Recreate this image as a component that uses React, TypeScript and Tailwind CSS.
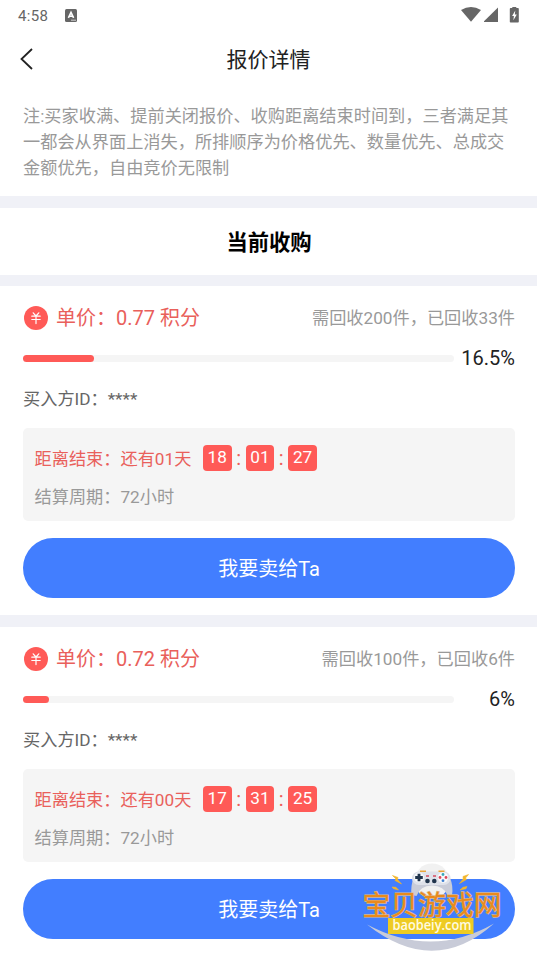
import { clsx } from "clsx";

type Offer = {
  price: string;
  need: number;
  done: number;
  percent: number;
  buyer: string;
  days: string;
  clock: string[];
  period: string;
};

const offers: Offer[] = [
  {
    price: "0.77",
    need: 200,
    done: 33,
    percent: 16.5,
    buyer: "****",
    days: "01",
    clock: ["18", "01", "27"],
    period: "72小时",
  },
  {
    price: "0.72",
    need: 100,
    done: 6,
    percent: 6,
    buyer: "****",
    days: "00",
    clock: ["17", "31", "25"],
    period: "72小时",
  },
];

function StatusBar() {
  return (
    <div className="flex h-8 items-center justify-between pl-[18px] pr-[18px] text-[#666]">
      <div className="flex items-center gap-[17px]">
        <span className="text-[15px] leading-5 tracking-[0.3px]">4:58</span>
        <svg width="12" height="13" viewBox="0 0 12 13" className="mb-px">
          <rect width="12" height="13" rx="1.5" fill="#666" />
          <path d="M3.4 8.8 6 3.4l2.6 5.4M4.3 7.2h3.4" stroke="#fff" strokeWidth="1.6" fill="none" />
          <path d="M6 11.2h5" stroke="#fff" strokeWidth=".7" />
        </svg>
      </div>
      <svg width="58" height="18" viewBox="0 0 58 18" fill="#666">
        <path d="M0 3Q10 -3 20 3L10 14.800Z" />
        <path d="M23 15V14.300L37 .6V15Z" />
        <path d="M51.300 -.5h4v1.600h1.700q.8 0 .8.8V14.700q0 .8-.8.8h-7.400q-.8 0-.8-.8V1.900q0-.8.8-.8h1.700Z" />
        <path d="M54.300 3.500 51.100 9h1.800L52.400 13.200 55.800 7.600h-2Z" fill="#fff" />
      </svg>
    </div>
  );
}

function YenIcon() {
  return (
    <svg width="24" height="24" viewBox="0 0 24 24" className="shrink-0">
      <circle cx="12" cy="12" r="12" fill="#ff5a57" />
      <path
        d="M9.200 6.800 12 10 14.800 6.800M12 10V17.600M7.800 10.200h8.400M7.800 13.500h8.400"
        fill="none"
        stroke="#fff"
        strokeWidth="1.200"
        strokeLinecap="round"
      />
    </svg>
  );
}

function Countdown({ clock }: { clock: string[] }) {
  return (
    <div className="flex items-center">
      {clock.map((part, i) => (
        <div key={i} className="flex items-center">
          {i > 0 && <span className="w-[14px] text-center text-[20px] leading-[26px] text-[#ee5c58]">:</span>}
          <span className="h-[26px] w-[28.700px] rounded-[4px] bg-[#ff5a57] text-center text-[17.200px] leading-[25px] text-white">
            {part}
          </span>
        </div>
      ))}
    </div>
  );
}

function OfferCard({ offer }: { offer: Offer }) {
  return (
    <section className="bg-white pb-[17px] pl-[23px] pr-[22px]">
      <div className="flex h-[63px] items-center justify-between">
        <div className="flex items-center gap-[8px] pl-px text-[20px] text-[#e9605b]">
          <YenIcon />
          <span className="whitespace-pre">单价：{offer.price} 积分</span>
        </div>
        <span className="pt-[3px] text-[17.200px] text-[#999]">
          需回收{offer.need}件，已回收{offer.done}件
        </span>
      </div>

      <div className="flex h-[18px] items-center justify-between">
        <div className="h-[7px] w-[431px] rounded-full bg-[#f5f5f5]">
          <div className="h-full rounded-full bg-[#ff5a57]" style={{ width: `${offer.percent}%` }} />
        </div>
        <span className="text-[20px] text-[#222]">{offer.percent}%</span>
      </div>

      <p className="flex h-[60.500px] items-center pt-[5px] text-[17.200px] text-[#666]">买入方ID：{offer.buyer}</p>

      <div className="h-[93px] rounded-[5px] bg-[#f5f5f5] px-[11.500px] pt-[17px]">
        <div className="flex h-[27px] items-start gap-[11.500px] text-[17.200px] leading-[27px] text-[#e9605b]">
          <span className="pt-px">距离结束：还有{offer.days}天</span>
          <Countdown clock={offer.clock} />
        </div>
        <p className="mt-3 text-[17.200px] leading-[26px] text-[#999]">结算周期：{offer.period}</p>
      </div>

      <button className="mt-[17.500px] block h-[60px] w-full rounded-full bg-[#427eff] pt-[2px] text-[20px] text-white">
        我要卖给Ta
      </button>
    </section>
  );
}

function Watermark() {
  return (
    <svg className="absolute left-[358px] top-[858px]" width="150" height="96" viewBox="0 0 150 96">
      <circle cx="74" cy="23" r="17.500" fill="#f1f1f1" />
      {/* gamepad */}
      <path d="M53.500 37Q52.500 28 55.500 20h36.500q3.500 8 2 17l-4 1Q86 27.500 74 27.500T58.500 38Z" fill="#c9ccd8" />
      <rect x="54" y="13.500" width="38.500" height="13.500" rx="6.700" fill="#dfe2ea" />
      <path d="M62 13.200h6M80.500 13.200h6" stroke="#e9a63a" strokeWidth="1.600" />
      <circle cx="61" cy="19.500" r="5" fill="#f5f7fa" />
      <path d="M61 15.700v7.600M57.200 19.500h7.600" stroke="#20344c" strokeWidth="2.800" />
      <circle cx="85" cy="19.500" r="5.200" fill="#f8f9fb" />
      <circle cx="85" cy="16.500" r="1.400" fill="#3aa8b8" />
      <circle cx="85" cy="22.700" r="1.400" fill="#3d7fd0" />
      <circle cx="82" cy="19.500" r="1.400" fill="#dd4658" />
      <circle cx="88" cy="19.500" r="1.400" fill="#dd4658" />
      <circle cx="69.500" cy="23" r="2.300" fill="#20344c" />
      <circle cx="76.300" cy="23" r="2.300" fill="#20344c" />
      <path d="M68 18h3M75 18h3" stroke="#d64b60" strokeWidth="1.300" />
      {/* sparks */}
      <g fill="#f4b62a" stroke="#f4b62a" strokeWidth=".6">
        <path d="M34.500 17.500 40 19.500 39.500 21.500 43.500 26 37 22.500 38 21Z" />
        <path d="M34 29 38 29.300 40.500 32 35.500 30.700Z" />
        <path d="M110.500 16.500 105 18.500 105.200 21 101.500 25.500 108.500 21.500 107.500 20Z" />
        <path d="M109 28.500 105 29.300 102 32 108 30.700Z" />
      </g>
      <path d="M9 66.500Q74 101 136 65.500Q76 119.500 9 66.500Z" fill="#c8cbd8" />
      <text
        x="4.500"
        y="57"
        fontSize="27.800"
        fontWeight="400"
        fill="#ea8a1c"
        stroke="#dcb98f"
        strokeWidth="1.300"
        paintOrder="stroke"
        textLength="139"
      >
        宝贝游戏网
      </text>
      <rect x="30" y="60" width="85.500" height="16" fill="#eecb22" />
      <text
        x="34.500"
        y="72"
        fontSize="14.500"
        fontWeight="600"
        fill="#fffbe0"
        textLength="79"
        lengthAdjust="spacingAndGlyphs"
        className="font-['Open_Sans',sans-serif]"
      >
        baobeiy.com
      </text>
    </svg>
  );
}

export default function App() {
  return (
    <main className="relative h-[956px] w-[537px] overflow-hidden bg-white font-['Roboto','Noto_Sans_CJK_SC',sans-serif]">
      <StatusBar />
      <header className="grid h-[54px] grid-cols-[1fr_auto_1fr] items-center px-5">
        <svg width="13" height="22" viewBox="0 0 13 22" fill="none" stroke="#222" strokeWidth="1.800">
          <path d="M12 1 1.500 11 12 21" />
        </svg>
        <h1 className="pt-[3px] text-[21px] text-[#222]">报价详情</h1>
      </header>
      <p className="h-[110px] px-[23px] pt-[17px] text-[17.200px] leading-[26px] text-[#999]">
        注:买家收满、提前关闭报价、收购距离结束时间到，三者满足其
        <br />
        一都会从界面上消失，所排顺序为价格优先、数量优先、总成交
        <br />
        金额优先，自由竞价无限制
      </p>
      <div className="border-y-[12px] border-b-[11px] border-[#f0f1f7]">
        <h2 className="flex h-[67px] items-center justify-center pl-px pt-[3px] text-[21.300px] font-bold text-black">
          当前收购
        </h2>
      </div>
      {offers.map((offer, i) => (
        <div key={offer.price} className={clsx(i > 0 && "border-t-[12px] border-[#f0f1f7]")}>
          <OfferCard offer={offer} />
        </div>
      ))}
      <Watermark />
    </main>
  );
}
